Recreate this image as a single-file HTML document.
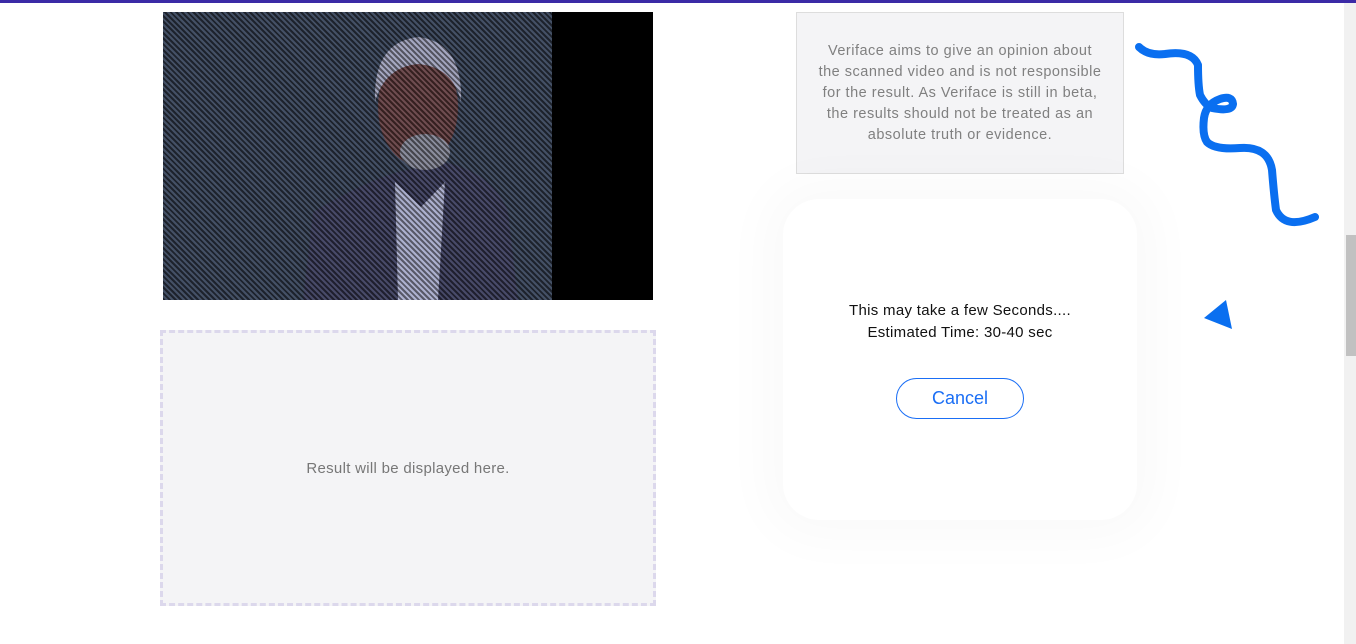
<!DOCTYPE html>
<html><head><meta charset="utf-8"><style>
*{margin:0;padding:0;box-sizing:border-box}
body{width:1356px;height:644px;overflow:hidden;background:#fff;font-family:"Liberation Sans",sans-serif;position:relative}
.top{position:absolute;left:0;top:0;width:1356px;height:3px;background:#3b2aa6}
.sb{position:absolute;left:1344px;top:3px;width:12px;height:641px;background:#f1f1f1}
.thumb{position:absolute;left:1346px;top:235px;width:10px;height:121px;background:#c1c1c1}
.video{position:absolute;left:163px;top:12px;width:490px;height:288px;background:#000;overflow:hidden}
.scene{position:absolute;left:0;top:0;width:389px;height:288px;background:#3a4559;overflow:hidden}
.stripes{position:absolute;inset:0;background:repeating-linear-gradient(45deg,rgba(0,0,0,.5) 0 2px,rgba(140,160,190,.12) 2px 4px)}
.result{position:absolute;left:160px;top:330px;width:496px;height:276px;background:#f4f4f6;border:3px dashed #dcd8ec;display:flex;align-items:center;justify-content:center;color:#777;font-size:15px;letter-spacing:.3px}
.note{position:absolute;left:796px;top:12px;width:328px;height:162px;background:#f4f4f6;border:1px solid #ddd;color:#808080;font-size:14.5px;line-height:21px;text-align:center;padding:28px 18px 0;letter-spacing:.5px}
.card{position:absolute;left:783px;top:199px;width:354px;height:321px;background:#fff;border-radius:36px;box-shadow:0 0 50px 20px rgba(0,0,0,.025);text-align:center;font-size:15px;color:#111;line-height:22px;padding-top:101px;letter-spacing:.3px}
.btn{display:inline-block;margin-top:34px;width:128px;height:41px;border:1px solid #1a6ef5;border-radius:21px;color:#1a6ef5;font-size:18px;line-height:39px;letter-spacing:0}
</style></head><body>
<div class="top"></div>
<div class="video"><div class="scene">
<svg width="389" height="288" style="position:absolute;left:0;top:0">
<path d="M140 288 L150 200 Q200 170 235 160 L280 150 Q330 160 345 200 L355 288 Z" fill="#3e3e5c"/>
<path d="M232 170 L235 288 L275 288 L282 170 L258 195 Z" fill="#b0b2d0"/>
<ellipse cx="255" cy="95" rx="40" ry="58" fill="#6a4040"/>
<path d="M212 90 Q210 30 255 25 Q300 30 298 90 Q290 55 255 52 Q222 55 212 90Z" fill="#a8a8c0"/>
<ellipse cx="262" cy="140" rx="25" ry="18" fill="#8a8a98"/>
</svg>
<div class="stripes"></div></div></div>
<div class="result">Result will be displayed here.</div>
<div class="note">Veriface aims to give an opinion about the scanned video and is not responsible for the result. As Veriface is still in beta, the results should not be treated as an absolute truth or evidence.</div>
<div class="card">This may take a few Seconds....<br>Estimated Time: 30-40 sec<br><span class="btn">Cancel</span></div>
<svg width="1356" height="644" style="position:absolute;left:0;top:0">
<path d="M1139 47 Q1148 56 1165 54 Q1192 50 1198 65 Q1198 85 1200 95 Q1205 105 1212 108 Q1232 112 1233 104 Q1232 95 1220 99 Q1206 104 1204 118 Q1202 135 1207 142 Q1215 150 1240 148 Q1268 146 1272 170 Q1274 195 1276 210 Q1285 230 1315 217" fill="none" stroke="#0a6ff0" stroke-width="8" stroke-linecap="round" stroke-linejoin="round"/>
<polygon points="1204,318 1226,300 1232,329" fill="#0a6ff0"/>
</svg>
<div class="sb"></div><div class="thumb"></div>
</body></html>
